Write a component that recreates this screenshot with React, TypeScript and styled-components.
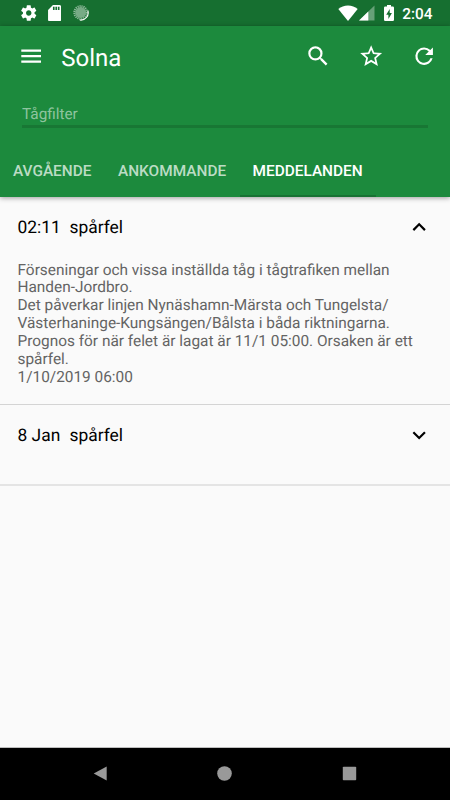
import React, { useState } from "react";
import styled, { createGlobalStyle } from "styled-components";

const GlobalStyle = createGlobalStyle`
  * { box-sizing: border-box; }
  body { margin: 0; background: #fafafa; }
  button { border: 0; margin: 0; padding: 0; background: none; font: inherit; color: inherit; text-align: left; }
`;

const Screen = styled.div`
  display: flex;
  flex-direction: column;
  width: 450px;
  height: 800px;
  overflow: hidden;
  background: #fafafa;
  font-family: Roboto, sans-serif;
  text-rendering: geometricPrecision;
`;

const StatusBar = styled.div`
  display: flex;
  flex: none;
  align-items: center;
  height: 26px;
  padding: 0 18px 0 21px;
  background: #166f30;
  color: #fff;
`;

const StatusIcon = styled.svg<{ $w: number; $h: number; $gap: number }>`
  flex: none;
  width: ${(p) => p.$w}px;
  height: ${(p) => p.$h}px;
  margin-right: ${(p) => p.$gap}px;
  fill: currentColor;
`;

const Spacer = styled.div`
  flex: 1;
`;

const Clock = styled.span`
  width: 29.8px;
  font-size: 15.33px;
  font-weight: 500;
  line-height: 26px;
  padding-top: 1px;
  white-space: nowrap;
`;

const Header = styled.header`
  display: flex;
  flex: none;
  flex-direction: column;
  height: 171px;
  background: #1c8a3d;
  color: #fff;
  box-shadow: 0 1px 5px rgba(0, 0, 0, 0.38);
`;

const Toolbar = styled.div`
  display: flex;
  align-items: center;
  height: 61px;
  padding: 0 13.1px 0 17.5px;
`;

const IconButton = styled.button<{ $gap: number }>`
  display: flex;
  flex: none;
  margin-right: ${(p) => p.$gap}px;
`;

const Icon = styled.svg`
  width: 26.3px;
  height: 26.3px;
  fill: currentColor;
`;

const Title = styled.h1`
  flex: 1;
  margin: 0;
  padding-top: 3px;
  font-size: 24px;
  font-weight: 400;
  line-height: 30px;
`;

const FilterField = styled.div`
  height: 41px;
  margin: 0 22px;
  padding-top: 17px;
  border-bottom: 3px solid #187734;
`;

const FilterInput = styled.input`
  display: block;
  width: 100%;
  height: 20px;
  padding: 0;
  border: 0;
  outline: 0;
  background: transparent;
  color: #fff;
  font-family: inherit;
  font-size: 15.33px;
  text-rendering: inherit;
  &::placeholder { color: #8dc49e; opacity: 1; }
`;

const Tabs = styled.nav`
  display: flex;
  height: 53px;
  margin-top: 16px;
`;

const Tab = styled.button<{ $active: boolean; $width: number }>`
  flex: none;
  width: ${(p) => p.$width}px;
  padding: 3px 0 0 13px;
  border-bottom: 2px solid ${(p) => (p.$active ? "#177233" : "transparent")};
  color: ${(p) => (p.$active ? "#fff" : "#bbdcc4")};
  font-size: 15.4px;
  font-weight: 500;
  text-rendering: inherit;
  white-space: nowrap;
`;

const Message = styled.article<{ $last?: boolean }>`
  flex: none;
  border-bottom: ${(p) => (p.$last ? "2px solid #e4e4e4" : "1px solid #d4d4d4")};
`;

const MessageHeader = styled.button`
  display: flex;
  align-items: center;
  width: 100%;
  height: 60px;
  padding: 0 17.5px;
  color: #000;
  font-size: 17.4px;
  line-height: 22px;
  text-rendering: inherit;
`;

const Time = styled.span`
  width: 52px;
  padding-top: 2px;
`;

const Reason = styled.span`
  flex: 1;
  padding-top: 2px;
`;

const MessageBody = styled.p`
  height: 147px;
  margin: 0;
  padding: 4.6px 17.5px 0;
  color: #646464;
  font-size: 15.4px;
  line-height: 17.85px;
  white-space: pre-line;
`;

const Collapsed = styled.div`
  height: 19px;
`;

const List = styled.main`
  display: flex;
  flex: 1;
  flex-direction: column;
  border-bottom: 1px solid #bdbdbd;
`;

const NavBar = styled.footer`
  display: flex;
  flex: none;
  align-items: center;
  justify-content: space-between;
  height: 52px;
  padding: 0 93.5px 1px 93px;
  background: #000;
  color: #999;
`;

const NavIcon = styled.svg`
  width: 15px;
  height: 15px;
  fill: currentColor;
`;

const paths = {
  menu: "M3 18h18v-2H3v2zm0-5h18v-2H3v2zm0-7v2h18V6H3z",
  search:
    "M15.5 14h-.79l-.28-.27A6.471 6.471 0 0 0 16 9.5 6.5 6.5 0 1 0 9.5 16c1.61 0 3.09-.59 4.23-1.57l.27.28v.79l5 4.99L20.49 19l-4.99-5zm-6 0C7.01 14 5 11.99 5 9.5S7.01 5 9.5 5 14 7.01 14 9.5 11.99 14 9.5 14z",
  star: "M22 9.24l-7.19-.62L12 2 9.19 8.63 2 9.24l5.46 4.73L5.82 21 12 17.27 18.18 21l-1.63-7.03L22 9.24zM12 15.4l-3.76 2.27 1-4.28-3.32-2.88 4.38-.38L12 6.1l1.71 4.04 4.38.38-3.32 2.88 1 4.28L12 15.4z",
  refresh:
    "M17.65 6.35A7.958 7.958 0 0 0 12 4a8 8 0 1 0 7.73 10h-2.08A5.99 5.99 0 0 1 12 18c-3.31 0-6-2.69-6-6s2.69-6 6-6c1.66 0 3.14.69 4.22 1.78L13 11h7V4l-2.35 2.35z",
  up: "M12 8l-6 6 1.41 1.41L12 10.83l4.59 4.58L18 14z",
  down: "M16.59 8.59L12 13.17 7.41 8.59 6 10l6 6 6-6z",
  gear: "M19.43 12.98c.04-.32.07-.64.07-.98s-.03-.66-.07-.98l2.11-1.65c.19-.15.24-.42.12-.64l-2-3.46c-.12-.22-.39-.3-.61-.22l-2.49 1c-.52-.4-1.08-.73-1.69-.98l-.38-2.65A.488.488 0 0 0 14 2h-4c-.25 0-.46.18-.49.42l-.38 2.65c-.61.25-1.17.59-1.69.98l-2.49-1c-.23-.09-.49 0-.61.22l-2 3.46c-.13.22-.07.49.12.64l2.11 1.65c-.04.32-.07.65-.07.98s.03.66.07.98l-2.11 1.65c-.19.15-.24.42-.12.64l2 3.46c.12.22.39.3.61.22l2.49-1c.52.4 1.08.73 1.69.98l.38 2.65c.03.24.24.42.49.42h4c.25 0 .46-.18.49-.42l.38-2.65c.61-.25 1.17-.59 1.69-.98l2.49 1c.23.09.49 0 .61-.22l2-3.46c.12-.22.07-.49-.12-.64l-2.11-1.65zM12 15.5c-1.93 0-3.5-1.57-3.5-3.5s1.57-3.5 3.5-3.5 3.5 1.57 3.5 3.5-1.57 3.5-3.5 3.5z",
  card: "M18 2h-8L4.02 8 4 20c0 1.1.9 2 2 2h12c1.1 0 2-.9 2-2V4c0-1.1-.9-2-2-2zm-6 6h-2V4h2v4zm3 0h-2V4h2v4zm3 0h-2V4h2v4z",
};

const Glyph = ({ d }: { d: string }) => (
  <Icon viewBox="0 0 24 24">
    <path d={d} />
  </Icon>
);

const tabs = [
  { label: "AVGÅENDE", width: 105 },
  { label: "ANKOMMANDE", width: 134.5 },
  { label: "MEDDELANDEN", width: 136.5 },
];

const body = `Förseningar och vissa inställda tåg i tågtrafiken mellan Handen-Jordbro.
Det påverkar linjen Nynäshamn-Märsta och Tungelsta/
Västerhaninge-Kungsängen/Bålsta i båda riktningarna.
Prognos för när felet är lagat är 11/1 05:00. Orsaken är ett spårfel.
1/10/2019 06:00`;

export default function App() {
  const [active, setActive] = useState(2);
  const [filter, setFilter] = useState("");

  return (
    <>
      <GlobalStyle />
      <Screen>
        <StatusBar>
          <StatusIcon viewBox="2 2 20 20" $w={15.5} $h={16} $gap={11.5}>
            <path d={paths.gear} />
          </StatusIcon>
          <StatusIcon viewBox="4 2 16 20" $w={13.2} $h={16.4} $gap={11.8}>
            <path d={paths.card} />
          </StatusIcon>
          <StatusIcon viewBox="0 0 16 16" $w={16} $h={16} $gap={0}>
            <circle cx="7.7" cy="7.5" r="5.4" opacity=".42" />
            <circle cx="7.7" cy="7.5" r="6.4" fill="none" stroke="#fff" strokeWidth="2" strokeDasharray="1.2 .81" opacity=".5" />
            <path d="M14.8 5.5A7.3 7.3 0 0 1 6.8 15" fill="none" stroke="#fff" strokeWidth="1.1" />
          </StatusIcon>
          <Spacer />
          <StatusIcon viewBox="0 0 20 16" $w={20} $h={16} $gap={1.5}>
            <path d="M10 16 .3 3.9C3 1.7 6.3.4 10 .4s7 1.3 9.7 3.5z" />
          </StatusIcon>
          <StatusIcon viewBox="0 0 16 16" $w={16} $h={16} $gap={8.5}>
            <path d="M15.5.5v15H0z" opacity=".35" />
            <path d="M9.3 6.5v9H0z" />
          </StatusIcon>
          <StatusIcon viewBox="0 0 10 16" $w={10} $h={16} $gap={8.5}>
            <path
              fillRule="evenodd"
              d="M3 0h4v1.6h1.8Q10 1.6 10 2.8v12Q10 16 8.8 16H1.2Q0 16 0 14.8v-12Q0 1.6 1.2 1.6H3zM5.7 4 2.2 9.7h2.2V14l3.5-5.9H5.7z"
            />
          </StatusIcon>
          <Clock>2:04</Clock>
        </StatusBar>
        <Header>
          <Toolbar>
            <IconButton $gap={17.5} aria-label="Meny"><Glyph d={paths.menu} /></IconButton>
            <Title>Solna</Title>
            <IconButton $gap={26.3} aria-label="Sök"><Glyph d={paths.search} /></IconButton>
            <IconButton $gap={26.3} aria-label="Favorit"><Glyph d={paths.star} /></IconButton>
            <IconButton $gap={0} aria-label="Uppdatera"><Glyph d={paths.refresh} /></IconButton>
          </Toolbar>
          <FilterField>
            <FilterInput placeholder="Tågfilter" value={filter} onChange={(e) => setFilter(e.target.value)} />
          </FilterField>
          <Tabs>
            {tabs.map((t, i) => (
              <Tab key={t.label} $active={i === active} $width={t.width} onClick={() => setActive(i)}>
                {t.label}
              </Tab>
            ))}
          </Tabs>
        </Header>
        <List>
          <Message>
            <MessageHeader>
              <Time>02:11</Time>
              <Reason>spårfel</Reason>
              <Glyph d={paths.up} />
            </MessageHeader>
            <MessageBody>{body}</MessageBody>
          </Message>
          <Message $last>
            <MessageHeader>
              <Time>8 Jan</Time>
              <Reason>spårfel</Reason>
              <Glyph d={paths.down} />
            </MessageHeader>
            <Collapsed />
          </Message>
        </List>
        <NavBar>
          <NavIcon viewBox="0 0 15 15"><path d="M13.7.6v13.8L.7 7.5z" /></NavIcon>
          <NavIcon viewBox="0 0 15 15"><circle cx="7.5" cy="7.5" r="7.3" /></NavIcon>
          <NavIcon viewBox="0 0 15 15"><rect x=".8" y=".8" width="13.4" height="13.4" rx=".8" /></NavIcon>
        </NavBar>
      </Screen>
    </>
  );
}
